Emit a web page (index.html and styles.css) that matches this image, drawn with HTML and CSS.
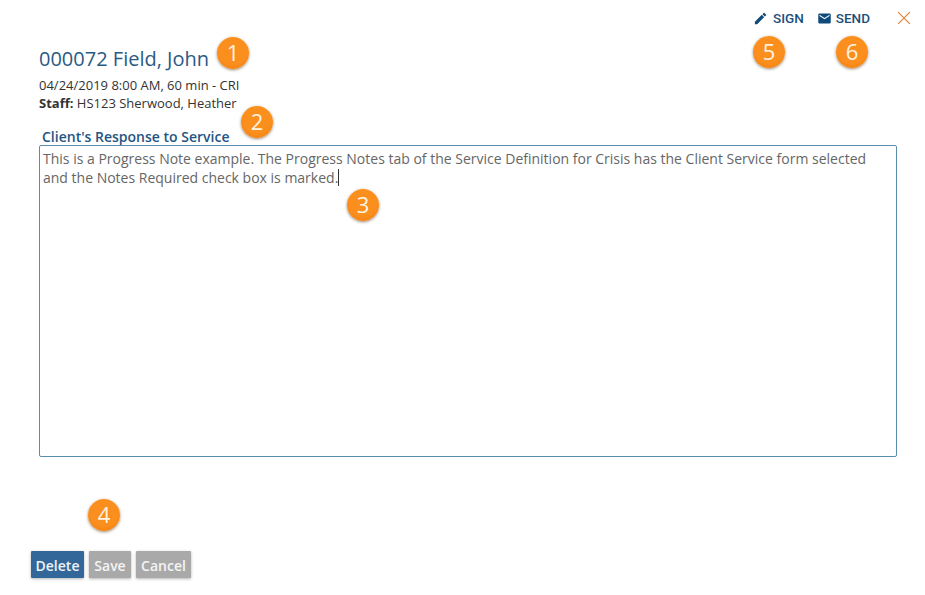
FILE: index.html
```html
<!DOCTYPE html>
<html lang="en">
<head>
<meta charset="utf-8">
<title>Progress Note</title>
<link rel="stylesheet" href="styles.css">
</head>
<body>
<div class="page">
  <div class="actions">
    <a class="action sign"><svg class="icon" viewBox="0 0 24 24"><path d="M3 17.25V21h3.75L17.81 9.94l-3.75-3.75L3 17.25zM20.71 7.04a1 1 0 0 0 0-1.41l-2.34-2.34a1 1 0 0 0-1.41 0l-1.83 1.83 3.75 3.75 1.83-1.83z"/></svg>SIGN</a>
    <a class="action send"><svg class="icon" viewBox="0 0 24 24"><path d="M20 4H4a2 2 0 0 0-2 2v12a2 2 0 0 0 2 2h16a2 2 0 0 0 2-2V6a2 2 0 0 0-2-2zm0 4-8 5-8-5V6l8 5 8-5v2z"/></svg>SEND</a>
    <svg class="close" viewBox="0 0 12 12"><path d="M1 1l10 10M11 1L1 11"/></svg>
  </div>
  <h1 class="title">000072 Field, John</h1>
  <p class="meta">04/24/2019 8:00 AM, 60 min - CRI</p>
  <p class="meta"><b>Staff:</b> HS123 Sherwood, Heather</p>
  <div class="label">Client's Response to Service</div>
  <div class="note">This is a Progress Note example. The Progress Notes tab of the Service Definition for Crisis has the Client Service form selected and the Notes Required check box is marked.<span class="caret"></span></div>
  <div class="buttons">
    <button class="btn primary">Delete</button>
    <button class="btn save">Save</button>
    <button class="btn cancel">Cancel</button>
  </div>
  <span class="badge b1">1</span>
  <span class="badge b2">2</span>
  <span class="badge b3">3</span>
  <span class="badge b4">4</span>
  <span class="badge b5">5</span>
  <span class="badge b6">6</span>
</div>
</body>
</html>
```
FILE: styles.css
```css
* { box-sizing: border-box; }
html, body { margin: 0; padding: 0; background: #fff; }
.page {
  position: relative;
  width: 925px;
  height: 595px;
  overflow: hidden;
  padding: 10px 28px 0 39px;
  font-family: "Open Sans", sans-serif;
  color: #333;
}
.actions {
  display: flex;
  justify-content: flex-end;
  align-items: center;
  height: 16px;
  margin-right: -14px;
}
.action {
  display: flex;
  align-items: center;
  font-family: Roboto, sans-serif;
  font-size: 13.5px;
  font-weight: 500;
  color: #1c4f7c;
}
.icon { width: 15px; height: 15px; fill: #0f4a7c; margin-right: 4px; }
.sign .icon { margin-left: -1px; margin-right: 5px; }
.send { margin-left: 13px; }
.close { width: 14px; height: 14px; margin-left: 27px; fill: none; stroke: #e0853f; stroke-width: 1.1; }
.title {
  margin: 20px 0 0;
  font-size: 20px;
  line-height: 26px;
  font-weight: 400;
  color: #2a5a84;
}
.meta { margin: 0; font-size: 13px; line-height: 18px; color: #333; }
.meta:first-of-type { margin-top: 4px; }
.label {
  margin: 16px 0 0 3px;
  font-size: 14px;
  line-height: 18px;
  font-weight: 600;
  color: #1f5582;
}
.note {
  height: 312px;
  border: 1px solid #5b8bad;
  border-radius: 2px;
  padding: 3px 12px 3px 3px;
  margin-top: -1px;
  font-size: 14px;
  line-height: 19px;
  color: #666;
}
.caret { display: inline-block; width: 1px; height: 17px; background: #333; vertical-align: -3px; }
.buttons { display: flex; gap: 5px; margin: 94px 0 0 -8px; }
.btn {
  width: 53px;
  height: 27px;
  padding: 2px 0 0;
  border: 0;
  border-radius: 1px;
  background: #a9a9a9;
  color: #f4f4f4;
  font-family: "Open Sans", sans-serif;
  font-size: 14px;
  font-weight: 600;
  box-shadow: 0 1px 3px rgba(0,0,0,.3);
}
.save { width: 42px; }
.cancel { width: 55px; }
.primary { background: #336699; color: #eef4fa; }
.badge {
  position: absolute;
  width: 32px;
  height: 32px;
  border-radius: 50%;
  background: radial-gradient(circle at 50% 40%, #fb8f1e 55%, #ee7a0c 100%);
  color: #fff2e0;
  font-family: "Open Sans", sans-serif;
  font-size: 22px;
  line-height: 31px;
  text-align: center;
  box-shadow: 0 1px 3px rgba(90,60,20,.6);
}
.b1 { left: 217px; top: 37px; }
.b2 { left: 241px; top: 106px; }
.b3 { left: 347px; top: 189px; }
.b4 { left: 88px; top: 499px; }
.b5 { left: 753px; top: 36px; }
.b6 { left: 836px; top: 36px; }
```
